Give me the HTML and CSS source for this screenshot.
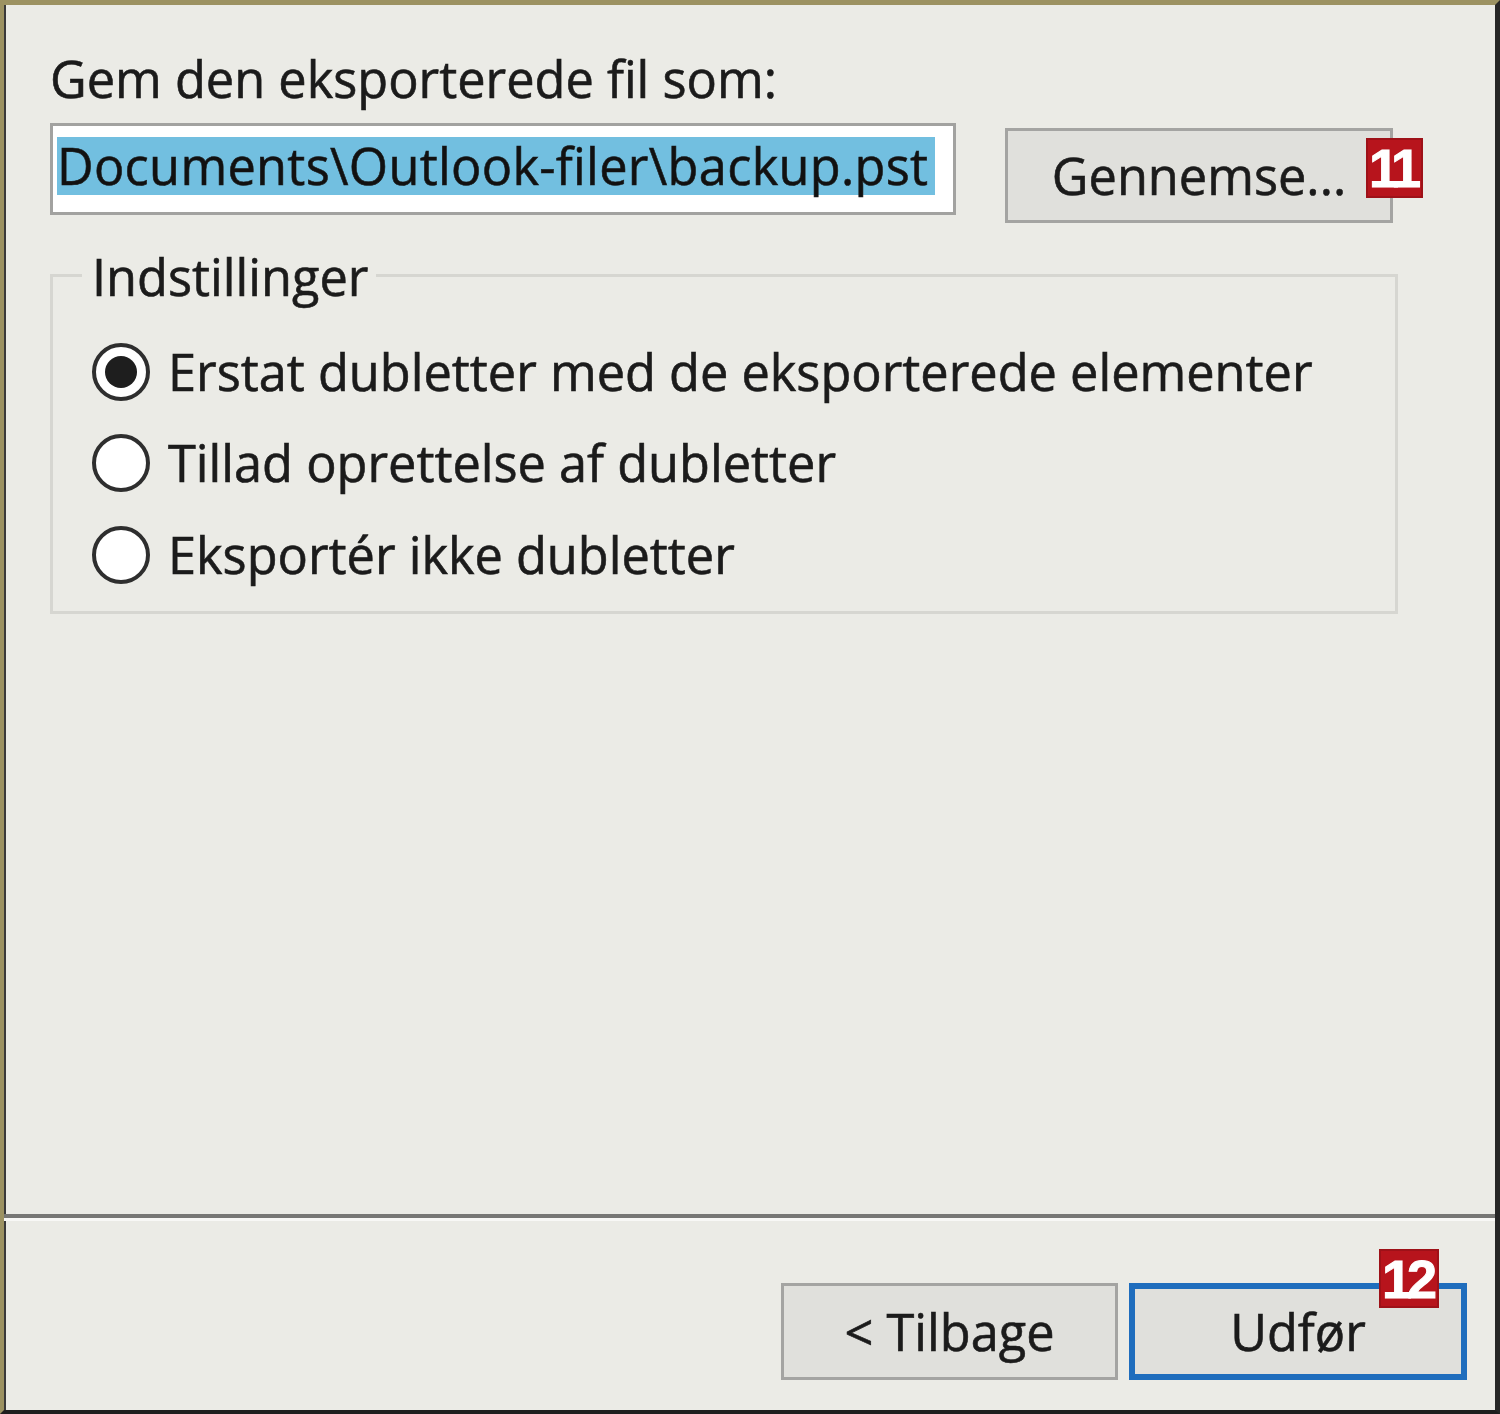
FILE: index.html
```html
<!DOCTYPE html>
<html lang="da">
<head>
<meta charset="utf-8">
<title>Eksportér til en fil</title>
<link rel="stylesheet" href="styles.css">
</head>
<body>
<div class="dialog">
  <div class="main">
    <div class="label">Gem den eksporterede fil som:</div>
    <div class="file-row">
      <div class="textbox"><span class="selection">Documents\Outlook-filer\backup.pst</span></div>
      <div class="btn btn-browse">Gennemse...<span class="badge badge-11">11</span></div>
    </div>
    <fieldset class="group">
      <legend class="legend">Indstillinger</legend>
      <div class="options">
        <div class="option"><span class="radio checked"></span><span class="opt-text">Erstat dubletter med de eksporterede elementer</span></div>
        <div class="option"><span class="radio"></span><span class="opt-text">Tillad oprettelse af dubletter</span></div>
        <div class="option"><span class="radio"></span><span class="opt-text">Eksportér ikke dubletter</span></div>
      </div>
    </fieldset>
  </div>
  <div class="separator"></div>
  <div class="footer">
    <div class="btn btn-footer">&lt; Tilbage</div>
    <div class="btn btn-footer btn-default">Udfør<span class="badge badge-12">12</span></div>
  </div>
</div>
</body>
</html>
```

FILE: styles.css
```css
html, body {
  margin: 0;
  padding: 0;
  background: #ebebe6;
}

.dialog {
  width: 1500px;
  height: 1414px;
  box-sizing: border-box;
  border-top: 5px solid #9c9262;
  border-left: 4px solid #9c9262;
  border-right: 5px solid #262626;
  border-bottom: 4px solid #1e1e1e;
  box-shadow: inset 2px 0 0 #3a3a3a;
  background: #ebebe6;
  display: flex;
  flex-direction: column;
  font-family: "Open Sans", "Noto Sans", sans-serif;
  font-size: 50.5px;
  line-height: 60px;
  color: #1b1b1b;
  -webkit-text-stroke: 0.6px #1b1b1b;
}

.main {
  flex: 1;
  padding: 44px 0 0 46px;
}

.label {
  height: 60px;
}

.file-row {
  display: flex;
  align-items: flex-start;
  gap: 49px;
  margin-top: 14px;
}

.textbox {
  width: 906px;
  height: 92px;
  box-sizing: border-box;
  border: 3px solid #a2a2a0;
  background: #ffffff;
  padding: 11px 18px 0 4px;
  overflow: hidden;
  white-space: nowrap;
}

.selection {
  display: block;
  height: 58px;
  line-height: 58px;
  background: #72bfe0;
  color: #111;
  letter-spacing: 0.3px;
}

.btn {
  position: relative;
  box-sizing: border-box;
  border: 3px solid #a4a4a2;
  background: #e0e0dc;
  display: flex;
  align-items: center;
  justify-content: center;
}

.btn-browse {
  width: 388px;
  height: 95px;
  margin-top: 5px;
}

.badge {
  position: absolute;
  box-sizing: border-box;
  background: #b7141c;
  border: 2px solid #9e1118;
  color: #ffffff;
  -webkit-text-stroke: 1px #ffffff;
  font-family: "Liberation Sans", Arial, sans-serif;
  font-weight: 700;
  font-size: 54px;
  line-height: 56px;
  letter-spacing: -5px;
  text-indent: -4px;
  text-align: center;
}

.badge-11 {
  left: 358px;
  top: 7px;
  width: 57px;
  height: 60px;
}

.badge-12 {
  left: 244px;
  top: -40px;
  width: 60px;
  height: 59px;
}

.group {
  width: 1348px;
  box-sizing: border-box;
  margin: 22px 0 0 0;
  border: 3px solid #d6d6d1;
  padding: 0;
  min-inline-size: 0;
}

.legend {
  margin-left: 29px;
  padding: 0 8px 0 10px;
  height: 60px;
  line-height: 64px;
}

.options {
  padding: 21px 0 10px 39px;
}

.option {
  display: flex;
  align-items: center;
  height: 91.5px;
  gap: 18px;
  white-space: nowrap;
}

.radio {
  position: relative;
  width: 58px;
  height: 58px;
  box-sizing: border-box;
  border: 4px solid #2e2e2e;
  border-radius: 50%;
  background: #ffffff;
  flex: none;
}

.radio.checked::after {
  content: "";
  position: absolute;
  left: 9px;
  top: 9px;
  width: 32px;
  height: 32px;
  border-radius: 50%;
  background: #1e1e1e;
}

.separator {
  border-top: 4px solid #777775;
  border-bottom: 3px solid #f8f8f6;
}

.footer {
  display: flex;
  justify-content: flex-end;
  gap: 11px;
  padding: 62px 28px 30px 0;
}

.btn-footer {
  width: 337px;
  height: 97px;
}

.btn-default {
  width: 338px;
  border: 6px solid #1f6dbd;
}
```
